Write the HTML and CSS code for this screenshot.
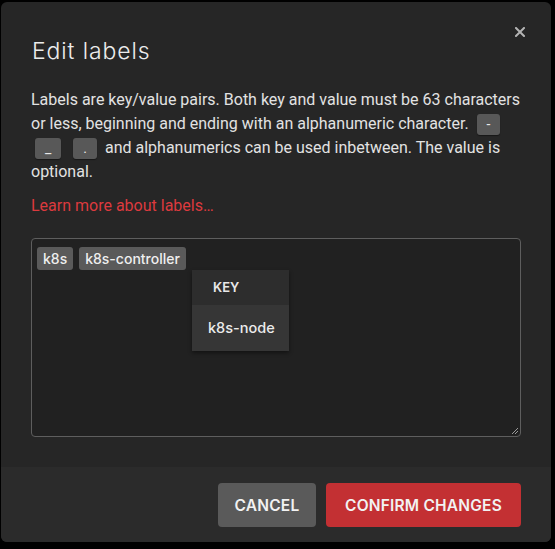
FILE: index.html
```html
<!DOCTYPE html>
<html lang="en">
<head>
<meta charset="utf-8">
<title>Edit labels</title>
<link rel="stylesheet" href="styles.css">
</head>
<body>
<div class="modal">
  <div class="modal-body">
    <button class="close" aria-label="Close">
      <svg width="10" height="10" viewBox="0 0 10 10"><path d="M1 1L9 9M9 1L1 9" stroke="#b4b4b4" stroke-width="2" stroke-linecap="square"/></svg>
    </button>
    <h1 class="title">Edit labels</h1>
    <p class="desc">Labels are key/value pairs. Both key and value must be 63 characters or less, beginning and ending with an alphanumeric character. <code class="kbd">-</code> <code class="kbd kbd-u">_</code> <code class="kbd">.</code> and alphanumerics can be used inbetween. The value is optional.</p>
    <a class="learn" href="#">Learn more about labels…</a>
    <div class="tag-input">
      <div class="tags">
        <span class="tag">k8s</span>
        <span class="tag">k8s-controller</span>
      </div>
      <div class="dropdown">
        <div class="dd-head">KEY</div>
        <div class="dd-item">k8s-node</div>
      </div>
      <svg class="grip" width="8" height="8" viewBox="0 0 8 8"><path d="M7 1L1 7M7 4L4 7" stroke="#9a9a9a" stroke-width="1"/></svg>
    </div>
  </div>
  <div class="modal-footer">
    <button class="btn btn-cancel">CANCEL</button>
    <button class="btn btn-confirm">CONFIRM CHANGES</button>
  </div>
</div>
</body>
</html>
```

FILE: styles.css
```css
* { box-sizing: border-box; }
html, body { margin: 0; padding: 0; background: #000; }
body { width: 555px; height: 549px; overflow: hidden; }

.modal {
  margin: 2px 0 0 1px;
  width: 550px;
  height: 540px;
  background: #262626;
  border-radius: 6px;
  display: flex;
  flex-direction: column;
  overflow: hidden;
  font-family: Roboto, "Liberation Sans", sans-serif;
  color: #e4e4e4;
}

.modal-body {
  position: relative;
  flex: 1;
  padding: 0 30px;
}

.close {
  position: absolute;
  top: 23px;
  right: 24px;
  width: 14px;
  height: 14px;
  padding: 2px;
  border: 0;
  background: transparent;
  display: flex;
  align-items: center;
  justify-content: center;
}

.title {
  margin: 34px 0 0 1px;
  font-family: Inter, "DejaVu Sans", sans-serif;
  font-weight: 350;
  font-size: 23px;
  line-height: 30px;
  letter-spacing: 0.9px;
  color: #ececec;
}

.desc {
  margin: 22px 0 0 0;
  font-size: 16px;
  line-height: 24px;
  color: #e2e2e2;
}

.kbd {
  display: inline-block;
  vertical-align: 0;
  height: 21px;
  line-height: 20px;
  padding: 0 10px;
  margin: 0 4px;
  border-radius: 3px;
  background: #585858;
  font-family: Roboto, sans-serif;
  font-size: 14px;
  color: #e8e8e8;
  box-shadow: 0 1px 1px rgba(0,0,0,0.4);
}

.learn {
  display: block;
  margin-top: 10px;
  font-size: 16px;
  line-height: 24px;
  color: #dc3a3e;
  text-decoration: none;
}

.tag-input {
  position: relative;
  margin-top: 20px;
  height: 199px;
  border: 1px solid #5e5e5e;
  border-radius: 4px;
  background: #212121;
  padding: 8px 5px;
}

.tags {
  display: flex;
  gap: 6px;
}

.tag {
  display: inline-block;
  height: 23px;
  line-height: 23px;
  padding: 0 6px;
  border-radius: 3px;
  background: #5a5a5a;
  font-family: Inter, "DejaVu Sans", sans-serif;
  font-weight: 500;
  font-size: 14px;
  color: #efefef;
}

.dropdown {
  position: absolute;
  left: 160px;
  top: 31px;
  width: 97px;
  background: #363636;
  box-shadow: 0 2px 4px rgba(0,0,0,0.45);
  font-family: Inter, "DejaVu Sans", sans-serif;
}

.dd-head {
  height: 35px;
  line-height: 35px;
  padding-left: 21px;
  background: #2d2d2d;
  font-size: 13px;
  font-weight: 600;
  color: #e8e8e8;
}

.dd-item {
  height: 46px;
  line-height: 46px;
  padding-left: 16px;
  font-size: 14.5px;
  font-weight: 500;
  color: #ececec;
}

.grip {
  position: absolute;
  right: 1px;
  bottom: 1px;
}

.modal-footer {
  height: 75px;
  background: #2b2b2b;
  display: flex;
  justify-content: flex-end;
  align-items: flex-start;
  gap: 10px;
  padding: 16px 30px 0 0;
}

.btn {
  height: 44px;
  border: 0;
  border-radius: 4px;
  padding: 0 16px;
  font-family: Inter, "DejaVu Sans", sans-serif;
  font-weight: 600;
  font-size: 15.5px;
  letter-spacing: 0.2px;
  color: #f2f2f2;
}

.btn-cancel { background: #5a5a5a; width: 98px; }
.btn-confirm { background: #c33033; width: 195px; }
```
